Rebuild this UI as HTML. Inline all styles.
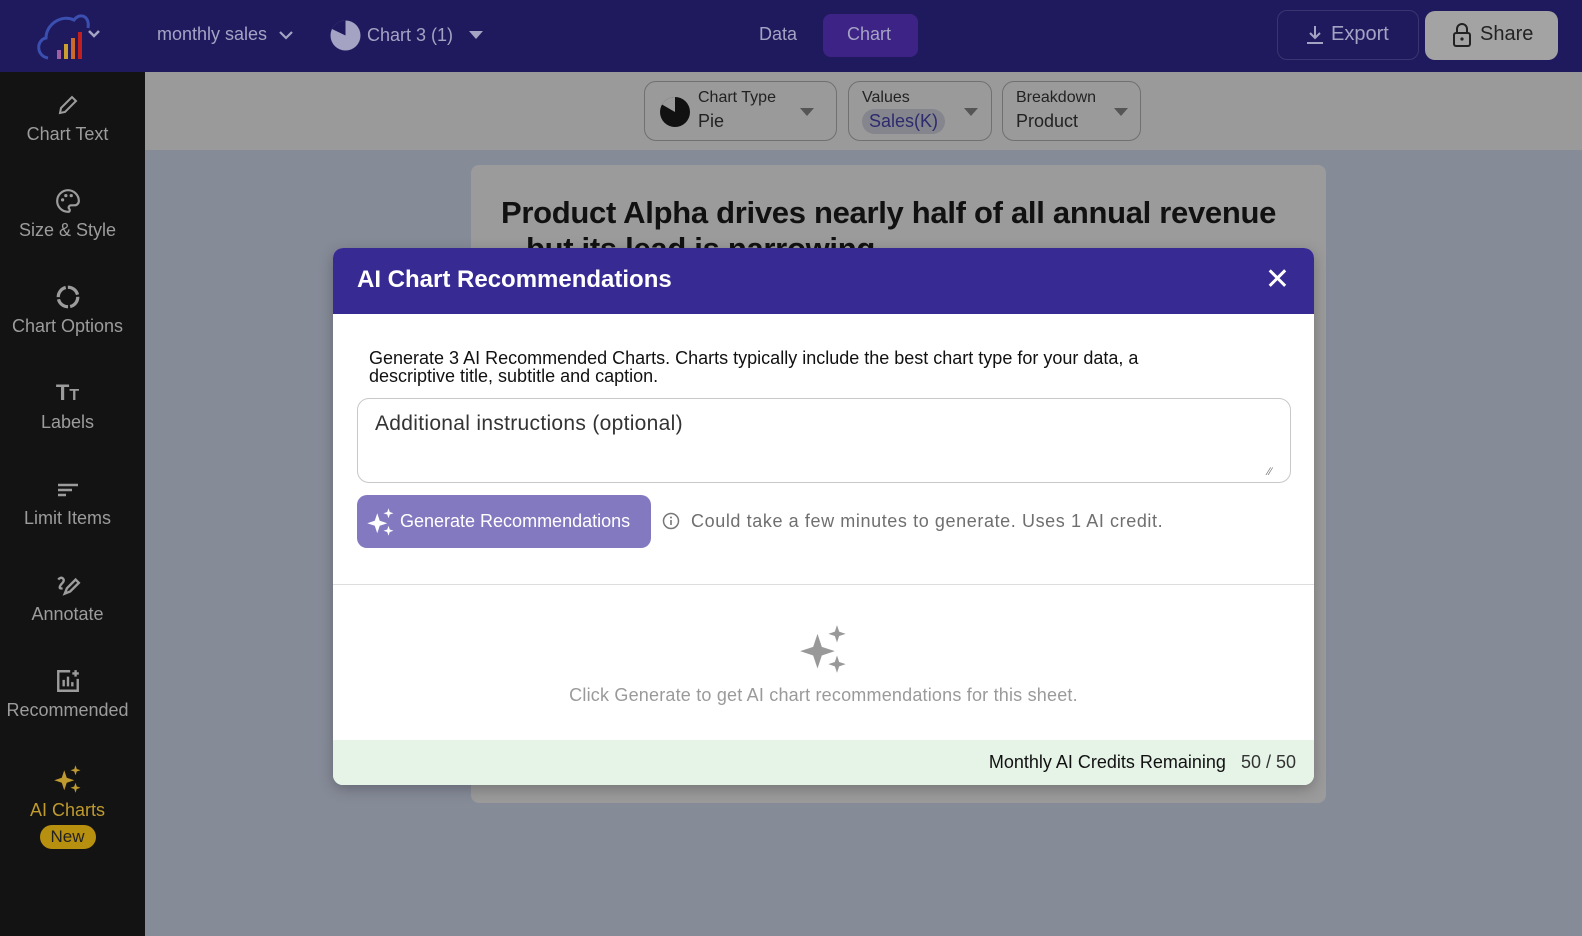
<!DOCTYPE html>
<html><head><meta charset="utf-8"><style>
*{box-sizing:border-box;margin:0;padding:0}
body{width:1582px;height:936px;overflow:hidden;background:#868b98;font-family:"Liberation Sans",sans-serif;position:relative}
.top{position:absolute;left:0;top:0;width:1582px;height:72px;background:#1f1a5d}
.side{position:absolute;left:0;top:72px;width:145px;height:864px;background:#131313}
.tool{position:absolute;left:145px;top:72px;right:0;height:78px;background:#9a9a9a}
.card{position:absolute;left:471px;top:165px;width:855px;height:638px;background:#9b9b9b;border-radius:8px}
.si{position:absolute;left:0;width:135px;text-align:center;color:#9c9c9c;font-size:18px}
.si svg{display:block;margin:0 auto 6px}
.t{position:absolute;color:#a5a3c4;font-size:18px}
.dd{position:absolute;top:9px;height:60px;border:1px solid #707070;border-radius:12px;color:#222;font-size:16px}
.modal{position:absolute;left:333px;top:248px;width:981px;height:537px;background:#fff;border-radius:10px;overflow:hidden;box-shadow:0 4px 14px rgba(0,0,0,.25)}
.mh{height:66px;background:#372a93;color:#fff;font-size:24px;font-weight:bold;padding:18px 24px}
</style></head><body>
<div class="top">
<svg style="position:absolute;left:34px;top:10px" width="70" height="52" viewBox="0 0 70 52"><path d="M14 48 C2 46 2 30 12 28 C12 14 28 4 40 10 C46 2 56 6 54 18" stroke="#3a4fb0" stroke-width="3" fill="none"/><rect x="23" y="40" width="4" height="9" fill="#a05fa0"/><rect x="30" y="34" width="4" height="15" fill="#c9a030"/><rect x="37" y="28" width="4" height="21" fill="#cc6a2a"/><rect x="44" y="22" width="4" height="27" fill="#c02020"/><path d="M55 21 l5 5 5-5" stroke="#a5a3c4" stroke-width="2.5" fill="none"/></svg>
<div class="t" style="left:157px;top:24px">monthly sales</div>
<svg style="position:absolute;left:279px;top:30px" width="14" height="10"><path d="M1 2 l6 6 6-6" stroke="#a5a3c4" stroke-width="2.2" fill="none"/></svg>
<svg style="position:absolute;left:330px;top:20px" width="31" height="31"><circle cx="15.5" cy="15.5" r="15" fill="#a5a3c4"/><path d="M15.5 15.5 L15.5 0.5 A15 15 0 0 0 2 9 Z" fill="#1f1a5d"/></svg>
<div class="t" style="left:367px;top:25px">Chart 3 (1)</div>
<div style="position:absolute;left:469px;top:31px;border:7px solid transparent;border-top:8px solid #a5a3c4"></div>
<div class="t" style="left:759px;top:24px">Data</div>
<div style="position:absolute;left:823px;top:14px;width:95px;height:43px;background:#3e2387;border-radius:8px"></div>
<div class="t" style="left:847px;top:24px">Chart</div>
<div style="position:absolute;left:1277px;top:10px;width:142px;height:50px;border:1px solid #3a3570;border-radius:10px"></div>
<svg style="position:absolute;left:1305px;top:24px" width="20" height="22"><path d="M10 2v12M5 9l5 5 5-5M2 19h16" stroke="#a5a3c4" stroke-width="2" fill="none"/></svg>
<div class="t" style="left:1331px;top:23px;font-size:20px">Export</div>
<div style="position:absolute;left:1425px;top:11px;width:133px;height:49px;background:#a3a3a3;border-radius:10px"></div>
<svg style="position:absolute;left:1452px;top:22px" width="20" height="26"><path d="M5 11 V7 a5 5 0 0 1 10 0 V11" stroke="#222" stroke-width="2" fill="none"/><rect x="2" y="11" width="16" height="13" rx="2" stroke="#222" stroke-width="2" fill="none"/><circle cx="10" cy="17" r="1.6" fill="#222"/></svg>
<div style="position:absolute;left:1480px;top:23px;font-size:20px;color:#222">Share</div>
</div>
<div class="side">
<div class="si" style="top:20px"><svg width="24" height="26" viewBox="0 0 24 24"><path d="M4 20 L5 15 L16 4 L20 8 L9 19 Z" stroke="#9c9c9c" stroke-width="2" fill="none"/></svg>Chart Text</div>
<div class="si" style="top:116px"><svg width="26" height="26" viewBox="0 0 24 24"><path d="M12 2a10 10 0 0 0 0 20c2 0 2-2 1-3s0-3 2-3h3a4 4 0 0 0 4-4C22 6 17 2 12 2z" stroke="#9c9c9c" stroke-width="2" fill="none"/><circle cx="7" cy="11" r="1.5" fill="#9c9c9c"/><circle cx="10" cy="7" r="1.5" fill="#9c9c9c"/><circle cx="15" cy="7" r="1.5" fill="#9c9c9c"/></svg>Size &amp; Style</div>
<div class="si" style="top:212px"><svg width="26" height="26" viewBox="0 0 24 24"><circle cx="12" cy="12" r="9" stroke="#9c9c9c" stroke-width="3" fill="none" stroke-dasharray="12 2"/></svg>Chart Options</div>
<div class="si" style="top:308px;"><div style="font-weight:bold;font-size:22px;height:32px">T<span style="font-size:16px">T</span></div>Labels</div>
<div class="si" style="top:404px"><svg width="24" height="26" viewBox="0 0 24 24"><path d="M2 8h20M2 13h14M2 18h8" stroke="#9c9c9c" stroke-width="2.5"/></svg>Limit Items</div>
<div class="si" style="top:500px"><svg width="26" height="26" viewBox="0 0 24 24"><path d="M3 7c3-4 7 0 4 3s-4 6 0 5M9 20l2-5 8-8 3 3-8 8z" stroke="#9c9c9c" stroke-width="2.2" fill="none"/></svg>Annotate</div>
<div class="si" style="top:596px"><svg width="26" height="26" viewBox="0 0 24 24"><path d="M14 3H3v18h18V10" stroke="#9c9c9c" stroke-width="2.2" fill="none"/><path d="M8 17V11M12 17V8M16 17v-4M19 2v6M16 5h6" stroke="#9c9c9c" stroke-width="2.2"/></svg>Recommended</div>
<div class="si" style="top:692px;color:#bf9a2e"><svg width="30" height="30" viewBox="0 0 24 24"><path d="M9 5 L11 11 L17 13 L11 15 L9 21 L7 15 L1 13 L7 11Z M18 1 L19 4 L22 5 L19 6 L18 9 L17 6 L14 5 L17 4Z M18 15 L19 18 L22 19 L19 20 L18 23 L17 20 L14 19 L17 18Z" fill="#bf9a2e"/></svg>AI Charts<div style="margin:4px auto 0;width:56px;height:24px;border-radius:12px;background:#b8900f;color:#222;font-size:17px;line-height:24px">New</div></div>
</div>
<div class="tool">
<div class="dd" style="left:499px;width:193px"><svg style="position:absolute;left:14px;top:14px" width="32" height="32"><circle cx="16" cy="16" r="15" fill="#111"/><path d="M16 16 L16 1 A15 15 0 0 0 3 8.5Z" fill="#9a9a9a"/></svg><div style="position:absolute;left:53px;top:7px">Chart Type</div><div style="position:absolute;left:53px;top:29px;font-size:18px">Pie</div><div style="position:absolute;left:155px;top:26px;border:7px solid transparent;border-top:8px solid #555"></div></div>
<div class="dd" style="left:703px;width:144px"><div style="position:absolute;left:13px;top:7px">Values</div><div style="position:absolute;left:13px;top:27px;background:#85858d;border-radius:13px;padding:2px 7px;color:#2d2a6e;font-size:18px">Sales(K)</div><div style="position:absolute;left:115px;top:26px;border:7px solid transparent;border-top:8px solid #555"></div></div>
<div class="dd" style="left:857px;width:139px"><div style="position:absolute;left:13px;top:7px">Breakdown</div><div style="position:absolute;left:13px;top:29px;font-size:18px">Product</div><div style="position:absolute;left:111px;top:26px;border:7px solid transparent;border-top:8px solid #555"></div></div>
</div>
<div class="card"><div style="position:absolute;left:30px;top:30px;font-size:31px;font-weight:bold;color:#111;line-height:36px;width:830px;letter-spacing:-0.3px">Product Alpha drives nearly half of all annual revenue<br>&nbsp;&nbsp;&nbsp;but its lead is narrowing</div></div>
<div class="modal">
<div class="mh">AI Chart Recommendations<span style="position:absolute;right:24px;top:14px;font-size:30px;font-weight:normal">&#10005;</span></div>
<div style="position:absolute;left:36px;top:101px;font-size:18px;line-height:18px;color:#111;width:840px">Generate 3 AI Recommended Charts. Charts typically include the best chart type for your data, a descriptive title, subtitle and caption.</div>
<div style="position:absolute;left:24px;top:150px;width:934px;height:85px;border:1px solid #c8c8c8;border-radius:12px;padding:13px 17px;font-size:21px;color:#333;letter-spacing:.3px">Additional instructions (optional)<span style="position:absolute;right:18px;bottom:4px;font-size:11px;color:#777">&#8725;&#8725;</span></div>
<div style="position:absolute;left:24px;top:247px;width:294px;height:53px;background:#8379c0;border-radius:10px;color:#fff;font-size:18px;padding:16px 0 0 43px">Generate Recommendations</div>
<svg style="position:absolute;left:33px;top:259px" width="30" height="30" viewBox="0 0 24 24"><path d="M9 5 L11 11 L17 13 L11 15 L9 21 L7 15 L1 13 L7 11Z M18 1 L19 4 L22 5 L19 6 L18 9 L17 6 L14 5 L17 4Z M18 15 L19 18 L22 19 L19 20 L18 23 L17 20 L14 19 L17 18Z" fill="#fff"/></svg>
<svg style="position:absolute;left:329px;top:264px" width="18" height="18"><circle cx="9" cy="9" r="7.5" stroke="#777" stroke-width="1.5" fill="none"/><path d="M9 8v5" stroke="#777" stroke-width="1.6"/><circle cx="9" cy="5.5" r="1" fill="#777"/></svg>
<div style="position:absolute;left:358px;top:263px;font-size:18px;color:#6f6f6f;letter-spacing:.6px">Could take a few minutes to generate. Uses 1 AI credit.</div>
<div style="position:absolute;left:0;top:336px;width:981px;height:1px;background:#ddd"></div>
<svg style="position:absolute;left:465px;top:375px" width="52" height="52" viewBox="0 0 24 24"><path d="M9 5 L11 11 L17 13 L11 15 L9 21 L7 15 L1 13 L7 11Z M18 1 L19 4 L22 5 L19 6 L18 9 L17 6 L14 5 L17 4Z M18 15 L19 18 L22 19 L19 20 L18 23 L17 20 L14 19 L17 18Z" fill="#999"/></svg>
<div style="position:absolute;left:0;width:981px;top:437px;text-align:center;font-size:18px;color:#9a9a9a;letter-spacing:.2px">Click Generate to get AI chart recommendations for this sheet.</div>
<div style="position:absolute;left:0;top:492px;width:981px;height:45px;background:#e6f4e8;font-size:18px;color:#111;text-align:right;padding:12px 18px 0 0">Monthly AI Credits Remaining&nbsp;&nbsp; <span style="color:#333">50 / 50</span></div>
</div>
</body></html>
